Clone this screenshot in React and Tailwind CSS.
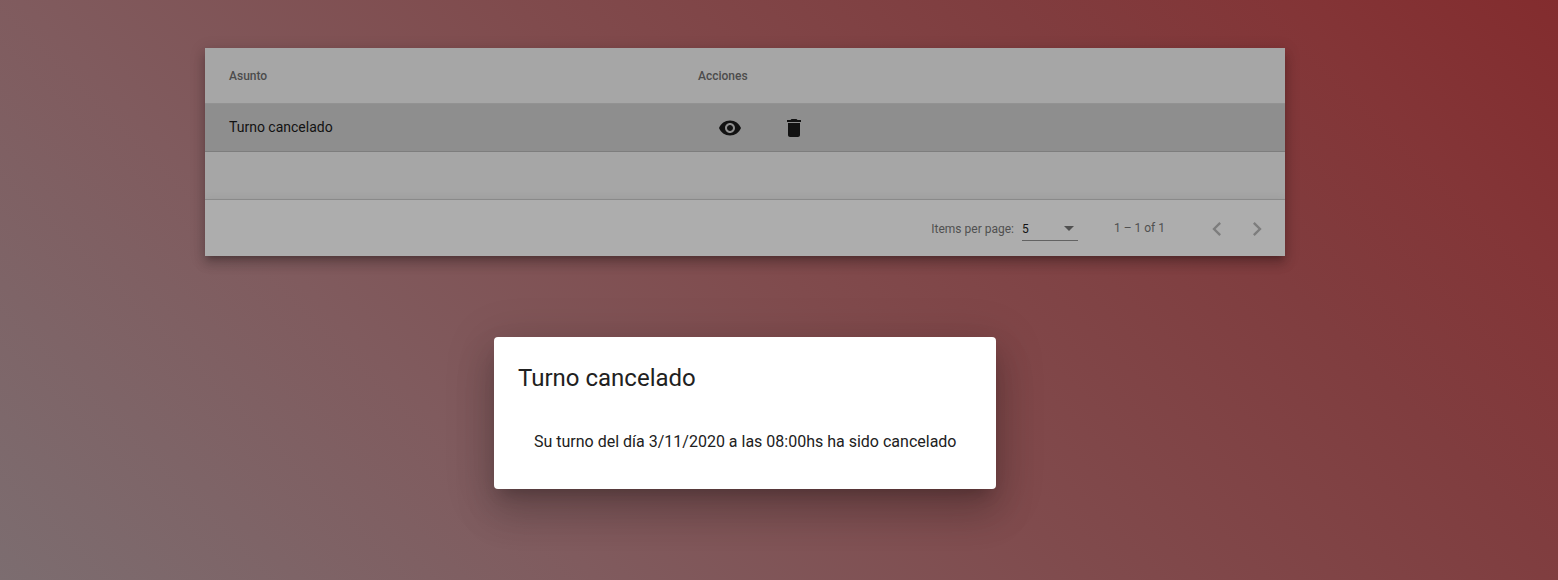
const EYE = "M12 4.5C7 4.5 2.73 7.61 1 12c1.73 4.39 6 7.5 11 7.5s9.27-3.11 11-7.5c-1.73-4.39-6-7.5-11-7.5zM12 17c-2.76 0-5-2.24-5-5s2.24-5 5-5 5 2.24 5 5-2.24 5-5 5zm0-8c-1.66 0-3 1.34-3 3s1.34 3 3 3 3-1.34 3-3-1.34-3-3-3z";
const TRASH = "M6 19c0 1.1.9 2 2 2h8c1.1 0 2-.9 2-2V7H6v12zM19 4h-3.5l-1-1h-5l-1 1H5v2h14V4z";
const PREV = "M15.41 7.41L14 6l-6 6 6 6 1.41-1.41L10.83 12z";
const NEXT = "M10 6L8.59 7.41 13.17 12l-4.58 4.59L10 18l6-6z";

function Icon({ path, className }) {
  return (
    <svg viewBox="0 0 24 24" fill="currentColor" className={className} aria-hidden="true">
      <path d={path} />
    </svg>
  );
}

function MessagesTable() {
  return (
    <section className="h-52 w-[1080px] bg-[#a6a6a6] text-[#121212] shadow-[0_5px_5px_-3px_rgba(0,0,0,0.2),0_8px_10px_1px_rgba(0,0,0,0.14),0_3px_14px_2px_rgba(0,0,0,0.12)]">
      <div className="flex h-[152px] flex-col">
        <div className="flex h-14 items-center border-b border-[#929292] pl-6 text-xs font-medium text-[#4c4c4c]">
          <div className="w-[469px]">Asunto</div>
          <div>Acciones</div>
        </div>
        <div className="flex h-12 items-center border-b border-[#7d7d7d] bg-[#8e8e8e] pl-6 text-sm">
          <div className="w-[469px] pb-0.5">Turno cancelado</div>
          <div className="flex gap-10 pt-px pl-5">
            <button type="button" aria-label="Ver"><Icon path={EYE} className="size-6" /></button>
            <button type="button" aria-label="Eliminar"><Icon path={TRASH} className="size-6" /></button>
          </div>
        </div>
      </div>
      <div className="flex h-14 items-center justify-end bg-[#adadad] pr-2 text-xs text-[#505050] shadow-[0_-1px_0_#8a8a8a,0_-2px_8px_rgba(0,0,0,0.06)] [clip-path:inset(-12px_0_0_0)]">
        <div className="flex items-center pt-0.5">
          <span className="mr-2">Items per page:</span>
          <div className="flex h-6 w-14 items-center justify-between border-b border-[#626262] pr-1 text-[#121212]">
            <span>5</span>
            <span className="border-x-5 border-t-5 border-x-transparent border-t-[#505050]" />
          </div>
        </div>
        <span className="mr-8 ml-9">1 – 1 of 1</span>
        <div className="flex pt-0.5 text-[#7d7d7d]">
          <button type="button" aria-label="Anterior" className="flex size-10 items-center justify-center"><Icon path={PREV} className="size-7" /></button>
          <button type="button" aria-label="Siguiente" className="flex size-10 items-center justify-center"><Icon path={NEXT} className="size-7" /></button>
        </div>
      </div>
    </section>
  );
}

function MessageDialog() {
  return (
    <div role="dialog" className="h-[152px] w-[502px] rounded bg-white px-6 pt-[25px] text-[#212121] shadow-[0_11px_15px_-7px_rgba(0,0,0,0.2),0_24px_38px_3px_rgba(0,0,0,0.14),0_9px_46px_8px_rgba(0,0,0,0.12)]">
      <h1 className="text-2xl leading-8">Turno cancelado</h1>
      <p className="mt-9 ml-4 text-base leading-6 whitespace-nowrap">Su turno del día 3/11/2020 a las 08:00hs ha sido cancelado</p>
    </div>
  );
}

export default function App() {
  return (
    <main className="flex h-[580px] w-[1558px] flex-col overflow-hidden bg-[linear-gradient(45deg,#7c6d70_0%,#805b5e_28%,#804b4d_51%,#803d3f_74%,#833537_87%,#832c2e_100%)] pt-12 font-['Roboto',sans-serif]">
      <div className="flex flex-col pl-[205px]">
        <MessagesTable />
        <div className="mt-[81px] ml-[289px]">
          <MessageDialog />
        </div>
      </div>
    </main>
  );
}
